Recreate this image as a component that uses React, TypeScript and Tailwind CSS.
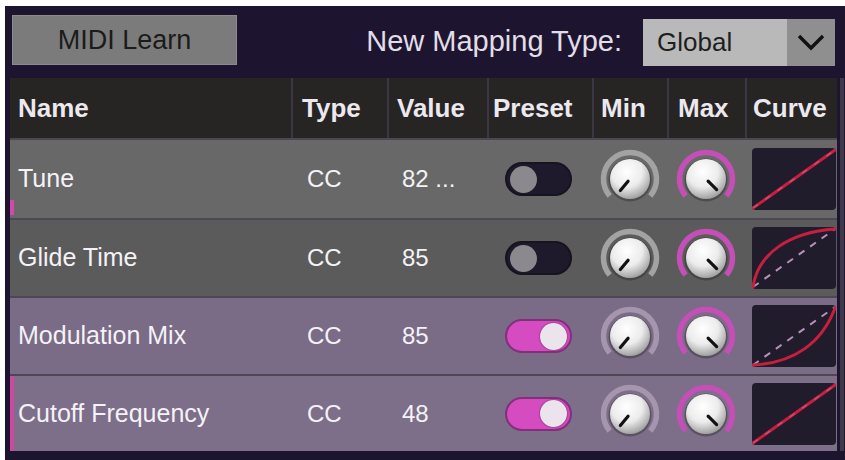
import React, { useId } from "react";

type Curve = "linear" | "log" | "exp";

type Mapping = {
  name: string;
  value: string;
  preset: boolean;
  curve: Curve;
  bg: string;
  h: string;
  marker?: "tick" | "full";
};

const mappings: Mapping[] = [
  { name: "Tune", value: "82 ...", preset: false, curve: "linear", bg: "bg-[#686868]", h: "h-[78px]", marker: "tick" },
  { name: "Glide Time", value: "85", preset: false, curve: "log", bg: "bg-[#5b5b5b]", h: "h-[76px]" },
  { name: "Modulation Mix", value: "85", preset: true, curve: "exp", bg: "bg-[#7a6b86]", h: "h-[76px]" },
  { name: "Cutoff Frequency", value: "48", preset: true, curve: "linear", bg: "bg-[#7d6e89]", h: "h-[75px]", marker: "full" },
];

const cols = "grid grid-cols-[281px_96px_100px_105px_75px_78px_92px]";

function Knob({ arc, pointer }: { arc: string; pointer: number }) {
  const id = useId();
  const c = 31;
  const pt = (deg: number, rad: number) => [
    c + rad * Math.cos((deg * Math.PI) / 180),
    c + rad * Math.sin((deg * Math.PI) / 180),
  ];
  const r = 26.5;
  const [sx, sy] = pt(140, r);
  const [ex, ey] = pt(40, r);
  const [x1, y1] = pt(pointer, 3);
  const [x2, y2] = pt(pointer, 15);
  return (
    <svg width={62} height={62} viewBox="0 0 62 62">
      <defs>
        <radialGradient id={id} cx="42%" cy="32%" r="70%">
          <stop offset="0%" stopColor="#ffffff" />
          <stop offset="55%" stopColor="#ececec" />
          <stop offset="100%" stopColor="#9d9d9d" />
        </radialGradient>
      </defs>
      <path
        d={`M${sx} ${sy} A${r} ${r} 0 1 1 ${ex} ${ey}`}
        fill="none"
        stroke={arc}
        strokeWidth={5.5}
      />
      <circle cx={c} cy={c + 1} r={21.5} fill="#1c1c1c" opacity={0.35} />
      <circle cx={c} cy={c} r={20} fill={`url(#${id})`} />
      <line x1={x1} y1={y1} x2={x2} y2={y2} stroke="#111" strokeWidth={3.2} strokeLinecap="round" />
    </svg>
  );
}

function Toggle({ on }: { on: boolean }) {
  return (
    <div
      className={
        on
          ? "flex h-[34px] w-[67px] items-center justify-end rounded-full border-2 border-[#82307b] bg-[#d44cc0] px-[3px]"
          : "flex h-[34px] w-[67px] items-center justify-start rounded-full border-2 border-[#17131f] bg-[#1f1a2b] px-[3px]"
      }
    >
      <div
        className={
          on
            ? "h-[27px] w-[27px] rounded-full bg-[#ebe4ec] shadow-[0_0_2px_#5a1f55]"
            : "h-[27px] w-[27px] rounded-full bg-[#8b898d]"
        }
      />
    </div>
  );
}

function CurveBox({ kind }: { kind: Curve }) {
  const red = "#c91f3f";
  const dash = "#d3a4d6";
  let path = "M1 60 L83 2";
  if (kind === "log") path = "M1 60 C6 26 38 5 83 2";
  if (kind === "exp") path = "M1 60 C42 58 70 38 83 3";
  return (
    <div className="h-[62px] w-[84px] rounded-[4px] bg-[#211c2c]">
      <svg width={84} height={62} viewBox="0 0 84 62">
        {kind === "linear" ? (
          <>
            <path d={path} stroke={red} strokeWidth={3} fill="none" strokeLinecap="round" />
            <path d="M1 60 L83 2" stroke={dash} strokeWidth={1.5} strokeDasharray="6 9" fill="none" opacity={0.35} />
          </>
        ) : (
          <>
            <path d="M1 60 L83 2" stroke={dash} strokeWidth={2} strokeDasharray="7 7" fill="none" opacity={0.85} />
            <path d={path} stroke={red} strokeWidth={3} fill="none" strokeLinecap="round" />
          </>
        )}
      </svg>
    </div>
  );
}

const headers = [
  { label: "Name", pad: "pl-[8px]" },
  { label: "Type", pad: "pl-[9px]" },
  { label: "Value", pad: "pl-[8px]" },
  { label: "Preset", pad: "pl-[4px]" },
  { label: "Min", pad: "pl-[7px]" },
  { label: "Max", pad: "pl-[9px]" },
  { label: "Curve", pad: "pl-[6px]" },
];

export default function App() {
  return (
    <div className="h-[460px] w-[845px] overflow-hidden bg-white pl-[5px] pt-[6px] font-['Liberation_Sans',Arial,sans-serif]">
      <div className="flex h-full flex-col bg-[#1d1530]">
        {/* top bar */}
        <div className="flex h-[72px] shrink-0 items-center pl-[7px] pr-[10px]">
          <button className="mb-[4px] h-[50px] w-[225px] border border-[#8a8a8a] bg-[#7b7b7b] text-[27px] text-[#1b1b1b]">
            MIDI Learn
          </button>
          <div className="ml-auto flex items-center gap-[21px]">
            <span className="text-[29px] text-[#e2dee6]">New Mapping Type:</span>
            <div className="flex h-[47px] w-[192px]">
              <div className="flex flex-1 items-center bg-[#b9b9b9] pl-[14px] text-[26px] text-[#1e1e1e]">
                Global
              </div>
              <div className="flex w-[48px] items-center justify-center bg-[#8f8f8f]">
                <svg width={28} height={18} viewBox="0 0 28 18">
                  <path d="M2 3 L14 15 L26 3" fill="none" stroke="#111" strokeWidth={3.4} />
                </svg>
              </div>
            </div>
          </div>
        </div>

        {/* mapping table */}
        <div className="flex pl-[5px]">
          <div className="flex w-[827px] flex-col bg-[#4c4753]">
            <div className={`${cols} h-[60px] bg-[#272424] text-[26px] font-bold text-[#ebe8ee]`}>
              {headers.map((h, i) => (
                <div
                  key={h.label}
                  className={`flex items-center ${h.pad} ${i > 0 ? "border-l-2 border-[#3c3745]" : ""}`}
                >
                  {h.label}
                </div>
              ))}
            </div>
            <div className="flex flex-col gap-[2px] pt-[2px]">
              {mappings.map((m) => (
                <div key={m.name} className={`${cols} relative ${m.h} ${m.bg} text-[#f4f2f6]`}>
                  {m.marker === "tick" && (
                    <div className="absolute bottom-[3px] left-0 h-[15px] w-[4px] bg-[#d24aa8]" />
                  )}
                  {m.marker === "full" && (
                    <div className="absolute inset-y-0 left-0 w-[4px] bg-[#c94a9f]" />
                  )}
                  <div className="flex items-center pl-[8px] text-[25px]">{m.name}</div>
                  <div className="flex items-center pl-[16px] text-[24px]">CC</div>
                  <div className="flex items-center pl-[15px] text-[24px]">{m.value}</div>
                  <div className="flex items-center pl-[18px]">
                    <Toggle on={m.preset} />
                  </div>
                  <div className="flex items-center justify-center">
                    <Knob arc={m.preset ? "#a596ad" : "#a3a3a3"} pointer={130} />
                  </div>
                  <div className="flex items-center justify-center">
                    <Knob arc="#c44fb6" pointer={45} />
                  </div>
                  <div className="flex items-center pl-[7px]">
                    <CurveBox kind={m.curve} />
                  </div>
                </div>
              ))}
            </div>
          </div>
          <div className="ml-[3px] w-[4px] bg-[#3f3949]" />
        </div>
      </div>
    </div>
  );
}
